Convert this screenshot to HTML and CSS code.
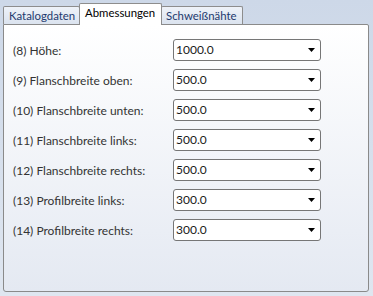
FILE: index.html
```html
<!DOCTYPE html>
<html>
<head>
<meta charset="utf-8">
<link rel="stylesheet" href="styles.css">
</head>
<body>
<div class="window">
  <div class="tabs">
    <div class="tab tab-kat">Katalogdaten</div>
    <div class="tab tab-abm active">Abmessungen</div>
    <div class="tab tab-sch">Schweißnähte</div>
  </div>
  <div class="panel">
    <div class="row"><span class="label">(8) Höhe:</span><div class="select"><span class="value">1000.0</span><svg class="arrow" width="7" height="4" viewBox="0 0 7 4"><path d="M0 0H7L3.5 4Z"/></svg></div></div>
    <div class="row"><span class="label">(9) Flanschbreite oben:</span><div class="select"><span class="value">500.0</span><svg class="arrow" width="7" height="4" viewBox="0 0 7 4"><path d="M0 0H7L3.5 4Z"/></svg></div></div>
    <div class="row"><span class="label">(10) Flanschbreite unten:</span><div class="select"><span class="value">500.0</span><svg class="arrow" width="7" height="4" viewBox="0 0 7 4"><path d="M0 0H7L3.5 4Z"/></svg></div></div>
    <div class="row"><span class="label">(11) Flanschbreite links:</span><div class="select"><span class="value">500.0</span><svg class="arrow" width="7" height="4" viewBox="0 0 7 4"><path d="M0 0H7L3.5 4Z"/></svg></div></div>
    <div class="row"><span class="label">(12) Flanschbreite rechts:</span><div class="select"><span class="value">500.0</span><svg class="arrow" width="7" height="4" viewBox="0 0 7 4"><path d="M0 0H7L3.5 4Z"/></svg></div></div>
    <div class="row"><span class="label">(13) Profilbreite links:</span><div class="select"><span class="value">300.0</span><svg class="arrow" width="7" height="4" viewBox="0 0 7 4"><path d="M0 0H7L3.5 4Z"/></svg></div></div>
    <div class="row"><span class="label">(14) Profilbreite rechts:</span><div class="select"><span class="value">300.0</span><svg class="arrow" width="7" height="4" viewBox="0 0 7 4"><path d="M0 0H7L3.5 4Z"/></svg></div></div>
  </div>
</div>
</body>
</html>
```
FILE: styles.css
```css
html, body {
  margin: 0;
  padding: 0;
}
body {
  width: 373px;
  height: 296px;
  background: linear-gradient(#cdd8e8, #dfe6f0);
  font-family: Lato, "Open Sans", sans-serif;
  font-size: 12px;
  overflow: hidden;
}
.window {
  box-sizing: border-box;
  height: 296px;
  padding: 3px 4px 4px 3px;
  display: flex;
  flex-direction: column;
}
.tabs {
  display: flex;
  align-items: flex-end;
  height: 21px;
}
.tab {
  box-sizing: border-box;
  height: 18px;
  border: 1px solid #8d8d8d;
  border-bottom: none;
  border-radius: 2px 2px 0 0;
  background: linear-gradient(#eef2f8, #dbe3ef);
  color: #1e3a6e;
  padding: 1px 0 0 5px;
  margin-right: -1px;
  white-space: nowrap;
  line-height: 15px;
  font-size: 11.4px;
  overflow: hidden;
}
.tab-kat { width: 77px; }
.tab-abm { width: 83px; }
.tab-sch { width: 82px; padding-left: 4px; }
.tab.active {
  height: 22px;
  margin-bottom: -1px;
  background: #ffffff;
  color: #000000;
  position: relative;
  z-index: 1;
  padding-top: 1px;
  line-height: 16px;
}
.panel {
  flex: 1;
  border: 1px solid #8a8a8a;
  border-radius: 0 2px 3px 3px;
  background: linear-gradient(#ffffff, #e4e9f2);
  padding: 14px 0 0 9px;
  display: flex;
  flex-direction: column;
  gap: 8px;
}
.row {
  display: flex;
  align-items: center;
  height: 22px;
}
.label {
  width: 160px;
  color: #333333;
}
.select {
  box-sizing: border-box;
  width: 148px;
  height: 22px;
  border: 1px solid #767676;
  border-radius: 3px;
  background: #ffffff;
  display: flex;
  align-items: center;
  justify-content: space-between;
  padding: 0 5px 0 2px;
  color: #1a1a1a;
}
.value {
  line-height: 18px;
  padding-bottom: 1px;
}
.arrow {
  fill: #000000;
}
```
